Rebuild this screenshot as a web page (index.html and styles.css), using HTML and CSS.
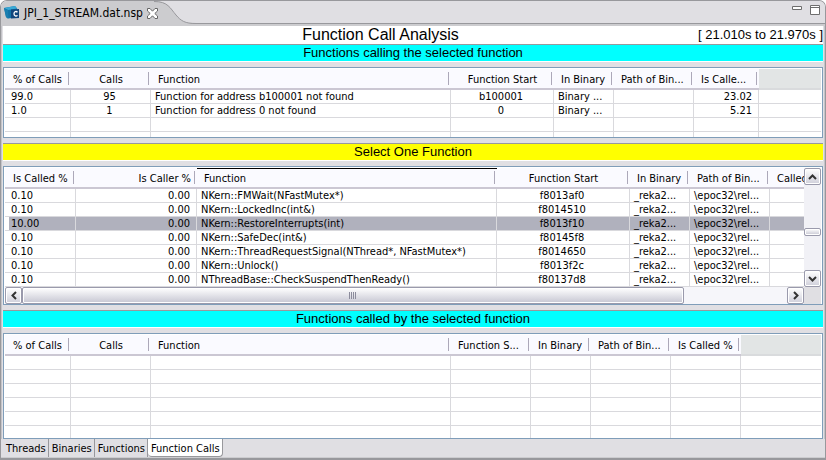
FILE: index.html
```html
<!DOCTYPE html>
<html lang="en">
<head>
<meta charset="utf-8">
<title>JPI_1_STREAM.dat.nsp</title>
<link rel="stylesheet" href="styles.css">
</head>
<body>
<div class="editor">
  <header class="tabbar">
    <div class="file-tab">
      <svg class="file-icon" width="16" height="14" viewBox="0 0 16 14" aria-hidden="true">
        <path d="M0 2 11 0l2 2.500v9L3.500 12.500 2 11z" fill="#1273a8"/>
        <path d="M0 2 11 0l2 2.500-9 1.500z" fill="#39a9d6"/>
        <path d="M0 2l4 2 .5 8.500L2 11z" fill="#1a7fb0"/>
        <path d="M7 3.500 15 3v9l-8 .5z" fill="#11457c"/>
        <path d="M13.500 6.200c-1.200-1.200-3.500-.8-3.500 1.600s2.300 2.800 3.500 1.600" fill="none" stroke="#fff" stroke-width="1.300"/>
      </svg>
      <span class="file-name">JPI_1_STREAM.dat.nsp</span>
      <button class="icon-button" aria-label="Close">
        <svg width="11" height="11" viewBox="0 0 11 11"><path d="M.5.5h2.500l2.500 2.700L8 .5h2.500V3L7.800 5.500l2.700 2.500v2.500H8L5.500 7.800 3 10.500H.5V8l2.700-2.500L.5 3z" fill="#fff" stroke="#666"/></svg>
      </button>
    </div>
    <svg class="tab-curve" width="42" height="24" viewBox="0 0 42 24" aria-hidden="true">
      <path d="M0 1C14 1 16 8 22 15c5 6 9 8.500 20 8.500V24H0z" fill="#cccccf"/>
      <path d="M0 1.500C14 1.500 16 8 22 15c5 6 9 8.500 20 8.500" fill="none" stroke="#98989c"/>
    </svg>
    <div class="window-actions">
      <button class="icon-button" aria-label="Minimize"><svg width="10" height="11" viewBox="0 0 10 11"><path d="M.5 1.500h9v3h-9z" fill="#fff" stroke="#6e6e6e"/></svg></button>
      <button class="icon-button" aria-label="Maximize"><svg width="10" height="11" viewBox="0 0 10 11"><path d="M.5.5h9v9h-9zM.5 2.500h9" fill="#fff" stroke="#6e6e6e"/></svg></button>
    </div>
  </header>

  <main class="content">
    <div class="title-row">
      <h1>Function Call Analysis</h1>
      <span class="range">[ 21.010s to 21.970s ]</span>
    </div>

    <h2 class="band band-cyan first">Functions calling the selected function</h2>
    <div class="pane callers">
      <table>
        <colgroup><col class="w67"><col class="w80"><col class="w300"><col class="w103"><col class="w60"><col class="w80"><col class="w65"><col></colgroup>
        <thead><tr><th>% of Calls</th><th class="center">Calls</th><th>Function</th><th class="center">Function Start</th><th>In Binary</th><th>Path of Bin...</th><th>Is Calle...</th><th class="blank"></th></tr></thead>
        <tbody>
          <tr><td>99.0</td><td class="center">95</td><td>Function for address b100001 not found</td><td class="center">b100001</td><td>Binary ...</td><td></td><td class="right">23.02</td><td></td></tr>
          <tr><td>1.0</td><td class="center">1</td><td>Function for address 0 not found</td><td class="center">0</td><td>Binary ...</td><td></td><td class="right">5.21</td><td></td></tr>
          <tr><td></td><td></td><td></td><td></td><td></td><td></td><td></td><td></td></tr>
          <tr class="cut"><td></td><td></td><td></td><td></td><td></td><td></td><td></td><td></td></tr>
        </tbody>
      </table>
    </div>

    <h2 class="band band-yellow">Select One Function</h2>
    <div class="pane functions">
      <div class="viewport">
        <table>
          <colgroup><col class="w72"><col class="w121"><col class="w300"><col class="w133"><col class="w60"><col class="w80"><col class="w60"></colgroup>
          <thead><tr><th>Is Called %</th><th class="right">Is Caller %</th><th class="sorted">Function</th><th class="center">Function Start</th><th>In Binary</th><th>Path of Bin...</th><th>Called</th></tr></thead>
          <tbody>
            <tr><td>0.10</td><td class="right">0.00</td><td>NKern::FMWait(NFastMutex*)</td><td class="center">f8013af0</td><td>_reka2...</td><td>\epoc32\rel...</td><td></td></tr>
            <tr><td>0.10</td><td class="right">0.00</td><td>NKern::LockedInc(int&amp;)</td><td class="center">f8014510</td><td>_reka2...</td><td>\epoc32\rel...</td><td></td></tr>
            <tr class="selected"><td>10.00</td><td class="right">0.00</td><td>NKern::RestoreInterrupts(int)</td><td class="center">f8013f10</td><td>_reka2...</td><td>\epoc32\rel...</td><td></td></tr>
            <tr><td>0.10</td><td class="right">0.00</td><td>NKern::SafeDec(int&amp;)</td><td class="center">f80145f8</td><td>_reka2...</td><td>\epoc32\rel...</td><td></td></tr>
            <tr><td>0.10</td><td class="right">0.00</td><td>NKern::ThreadRequestSignal(NThread*, NFastMutex*)</td><td class="center">f8014650</td><td>_reka2...</td><td>\epoc32\rel...</td><td></td></tr>
            <tr><td>0.10</td><td class="right">0.00</td><td>NKern::Unlock()</td><td class="center">f8013f2c</td><td>_reka2...</td><td>\epoc32\rel...</td><td></td></tr>
            <tr><td>0.10</td><td class="right">0.00</td><td>NThreadBase::CheckSuspendThenReady()</td><td class="center">f80137d8</td><td>_reka2...</td><td>\epoc32\rel...</td><td></td></tr>
          </tbody>
        </table>
      </div>
      <div class="scroll vertical">
        <button class="scroll-button" aria-label="Scroll up"><svg width="9" height="6" viewBox="0 0 9 6"><path d="M1 5l3.500-3.500L8 5"/></svg></button>
        <div class="track"><div class="thumb"></div></div>
        <button class="scroll-button" aria-label="Scroll down"><svg width="9" height="6" viewBox="0 0 9 6"><path d="M1 1l3.500 3.500L8 1"/></svg></button>
      </div>
      <div class="scroll horizontal">
        <button class="scroll-button" aria-label="Scroll left"><svg width="6" height="9" viewBox="0 0 6 9"><path d="M5 1L1.500 4.500 5 8"/></svg></button>
        <div class="track"><div class="thumb"><svg width="8" height="7" viewBox="0 0 8 7"><path d="M.5 0v7M2.500 0v7M4.500 0v7M6.500 0v7"/></svg></div></div>
        <button class="scroll-button" aria-label="Scroll right"><svg width="6" height="9" viewBox="0 0 6 9"><path d="M1 1l3.500 3.500L1 8"/></svg></button>
      </div>
    </div>

    <h2 class="band band-cyan">Functions called by the selected function</h2>
    <div class="pane callees">
      <table>
        <colgroup><col class="w67"><col class="w80"><col class="w300"><col class="w80"><col class="w60"><col class="w80"><col class="w70"><col></colgroup>
        <thead><tr><th>% of Calls</th><th class="center">Calls</th><th>Function</th><th>Function S...</th><th>In Binary</th><th>Path of Bin...</th><th>Is Called %</th><th class="blank"></th></tr></thead>
        <tbody>
          <tr><td></td><td></td><td></td><td></td><td></td><td></td><td></td><td></td></tr>
          <tr><td></td><td></td><td></td><td></td><td></td><td></td><td></td><td></td></tr>
          <tr><td></td><td></td><td></td><td></td><td></td><td></td><td></td><td></td></tr>
          <tr><td></td><td></td><td></td><td></td><td></td><td></td><td></td><td></td></tr>
          <tr><td></td><td></td><td></td><td></td><td></td><td></td><td></td><td></td></tr>
          <tr class="cut tall"><td></td><td></td><td></td><td></td><td></td><td></td><td></td><td></td></tr>
        </tbody>
      </table>
    </div>
  </main>

  <nav class="page-tabs">
    <button>Threads</button><button>Binaries</button><button>Functions</button><button class="active">Function Calls</button>
  </nav>
</div>
</body>
</html>
```
FILE: styles.css
```css
* { box-sizing: border-box; }
body {
  margin: 0;
  background: #fff;
  color: #000;
  font: 11px/13px "DejaVu Sans Condensed", "Noto Sans", sans-serif;
}
button {
  margin: 0;
  padding: 0;
  border: 0;
  background: none;
  color: inherit;
  font: inherit;
}
svg { display: block; }

.editor {
  min-height: 100vh;
  display: flex;
  flex-direction: column;
  background: #e0dfe3;
  border: 1px solid #98989c;
  border-bottom-width: 2px;
  border-radius: 7px 7px 0 0;
  overflow: hidden;
}

.tabbar {
  display: flex;
  height: 25px;
  background: #e0dfe3;
  border-bottom: 2px solid #cccccf;
  box-shadow: inset 0 -1px #98989c;
}
.file-tab {
  display: flex;
  align-items: center;
  gap: 4px;
  height: 24px;
  padding-left: 3px;
  background: #cccccf;
  font-size: 12px;
}
.tab-curve { margin: -1px 0 0 -4px; }
.icon-button { flex: none; }
.file-tab .icon-button { position: relative; z-index: 1; }
.window-actions {
  display: flex;
  gap: 8px;
  margin-left: auto;
  padding: 4px 5px 0 0;
  align-items: flex-start;
}

.content {
  flex: 1;
  display: flex;
  flex-direction: column;
  padding: 0 1px;
  border-left: 1px solid #c4c4c8;
  border-right: 1px solid #c4c4c8;
}
.content > * { flex: none; }
.title-row {
  display: flex;
  justify-content: space-between;
  align-items: center;
  height: 18px;
  padding-left: 36.5%;
  background: #fff;
  font-family: "Liberation Sans", sans-serif;
}
h1, h2 { margin: 0; font-weight: normal; }
h1 { font-size: 16px; line-height: 18px; }
.range { font-size: 13px; line-height: 18px; }
.band {
  height: 18px;
  margin-top: 5px;
  border-top: 1px solid #98989c;
  border-bottom: 1px solid #fff;
  font: 13px/16px "Liberation Sans", sans-serif;
  text-align: center;
}
.band.first { margin-top: 0; }
.band-cyan { background: #0ff; }
.band-yellow { background: #ff0; }

.pane {
  margin-top: 5px;
  padding: 1px 1px 0;
  border: 1px solid #7f9db9;
  background: #fff;
  overflow: hidden;
}
.content .callees { flex: 1 0 auto; }

table {
  width: 100%;
  table-layout: fixed;
  border-collapse: separate;
  border-spacing: 0;
}
.w60 { width: 60px; }
.w65 { width: 65px; }
.w67 { width: 66px; }
.w70 { width: 70px; }
.w72 { width: 71px; }
.w80 { width: 80px; }
.w103 { width: 103px; }
.w121 { width: 121px; }
.w133 { width: 133px; }
.w300 { width: 300px; }

th, td {
  overflow: hidden;
  white-space: nowrap;
  font-weight: normal;
  text-align: left;
}
th {
  height: 21px;
  padding: 2px 6px 0 7px;
  border-bottom: 2px solid #cbc7d3;
  background: linear-gradient(#aca8b9, #aca8b9) right 2px center / 1px 13px no-repeat #fafaff;
}
td {
  height: 14px;
  padding: 1px 6px 0 4px;
  line-height: 12px;
  border-right: 1px solid #d9d9dd;
  border-bottom: 1px solid #d9d9dd;
}
th:first-child { padding-left: 8px; }
td:first-child { padding-left: 6px; }
td:last-child { border-right: 0; }
th:last-child { background-image: none; }
.center { text-align: center; }
th.center { padding: 2px 6px 0; }
.right { text-align: right; }
th.blank { background: #e2e5e5; border-bottom-color: #d9dbdd; }
th.sorted { box-shadow: inset 0 1px #000; }
.cut td { height: 5px; border-bottom: 0; }
.cut.tall td { height: 12px; }
.selected td { background: #b0b1bd; border-right-color: #d9d9dd; }
.selected td:first-child { background: linear-gradient(90deg, #fff 4px, #b0b1bd 4px); }

.functions {
  display: grid;
  grid-template-columns: 1fr 17px;
  background: #fff;
}
.viewport { min-width: 0; overflow: hidden; }
.viewport table { width: 825px; }
.scroll { display: flex; }
.vertical { flex-direction: column; width: 17px; background: #f1f1f6; }
.horizontal { height: 17px; background: #f6f6fa; }
.functions::after { content: ""; background: #e0dfe3; }
.scroll-button {
  flex: none;
  display: grid;
  place-items: center;
  width: 17px;
  height: 17px;
  border: 1px solid #9a9aac;
  border-radius: 2px;
  background: linear-gradient(#fff, #cfcfda);
  box-shadow: inset 0 0 0 1px #fff;
}
.scroll-button path { fill: none; stroke: #333; stroke-width: 2; }
.track { flex: 1; display: flex; }
.vertical .track { flex-direction: column; padding-top: 43px; }
.thumb {
  display: grid;
  place-items: center;
  border: 1px solid #9a9aac;
  border-radius: 2px;
  background: linear-gradient(#fff, #c6c6d2);
  box-shadow: inset 0 0 0 1px #fff;
}
.vertical .thumb { height: 8px; }
.horizontal .thumb { width: 86.5%; }
.thumb path { stroke: #8c8c9c; }

.page-tabs {
  display: flex;
  height: 19px;
  padding: 0 2px;
  border-bottom: 1px solid #cccccf;
}
.page-tabs button {
  height: 18px;
  padding: 1px 2px 0 3px;
  border-right: 1px solid #98989c;
}
.page-tabs .active {
  background: #fff;
  border: 1px solid #98989c;
  border-top: 0;
  border-left: 0;
  border-radius: 0 0 4px 4px;
}
```
